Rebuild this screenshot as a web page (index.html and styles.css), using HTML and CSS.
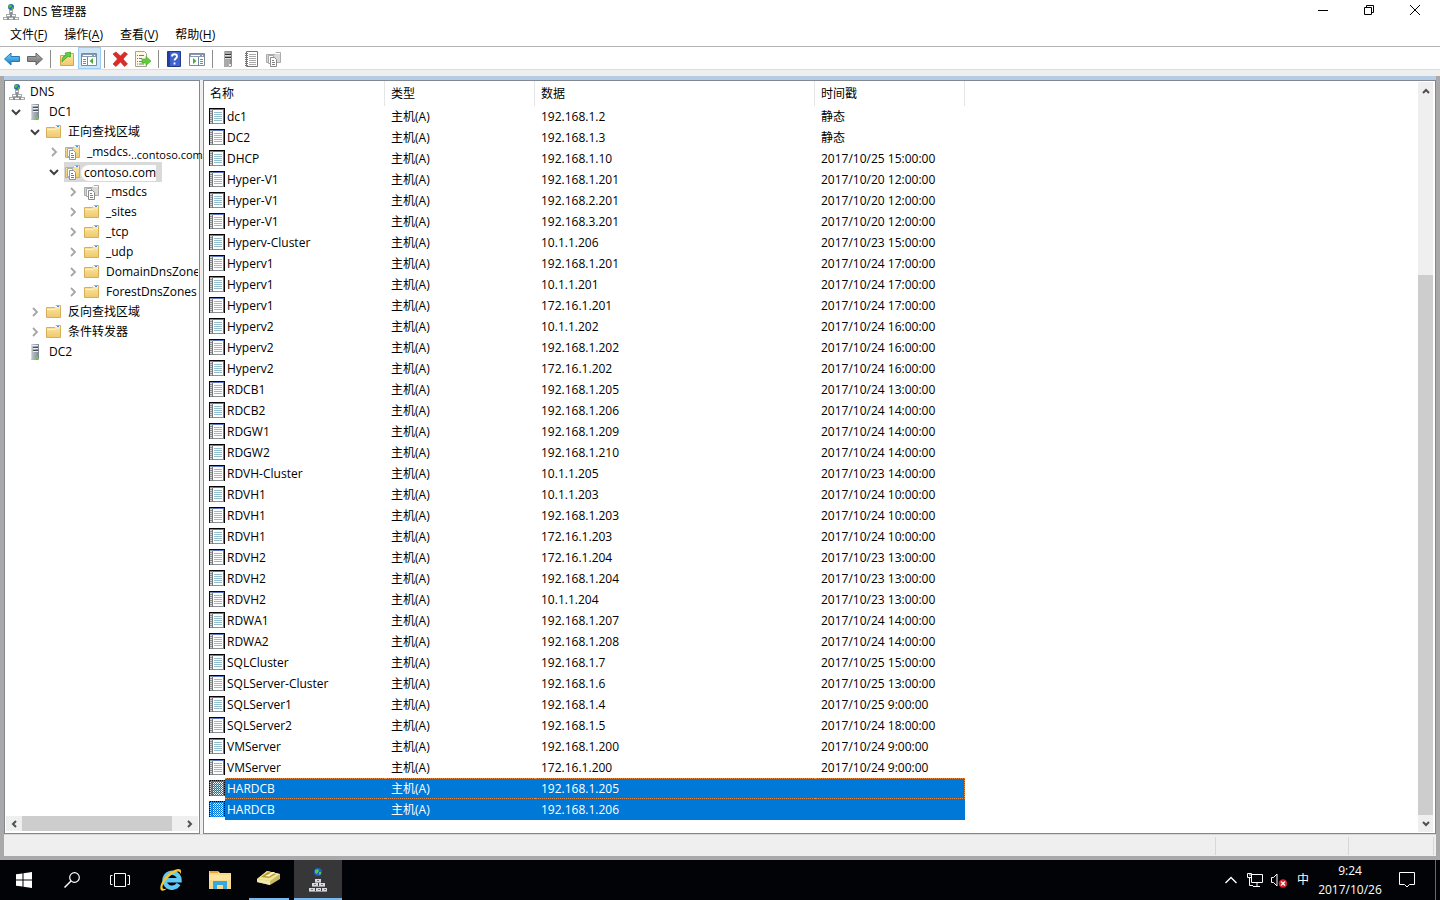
FILE: index.html
```html
<!DOCTYPE html>
<html lang="zh-CN">
<head>
<meta charset="utf-8">
<title>DNS 管理器</title>
<link rel="stylesheet" href="styles.css">
</head>
<body>
<svg class="sprite" aria-hidden="true">
  <defs>
    <linearGradient id="gFolder" x1="0" y1="0" x2="0" y2="1"><stop offset="0" stop-color="#fbe7ac"/><stop offset="1" stop-color="#f0c869"/></linearGradient>
    <linearGradient id="gServer" x1="0" y1="0" x2="1" y2="0"><stop offset="0" stop-color="#c3cad1"/><stop offset="1" stop-color="#7d8790"/></linearGradient>
    <linearGradient id="gBlue" x1="0" y1="0" x2="0" y2="1"><stop offset="0" stop-color="#7fd4f8"/><stop offset="1" stop-color="#1279c8"/></linearGradient>
    <linearGradient id="gGray" x1="0" y1="0" x2="0" y2="1"><stop offset="0" stop-color="#b0b0b0"/><stop offset="1" stop-color="#6e6e6e"/></linearGradient>
    <pattern id="pDither" width="2" height="2" patternUnits="userSpaceOnUse"><path d="M0 0h1v1H0zM1 1h1v1H1z" fill="#0078d7"/></pattern>
  </defs>
  <symbol id="i-dns" viewBox="0 0 16 16">
    <circle cx="8" cy="3" r="3" fill="#2468c4"/><path d="M6 1l2-.5 1 1.500-2 2-2-1zM9 3l2 .5-1 2-1.500 0z" fill="#4fbf45"/>
    <path d="M6 6h4v4H6zM3 10h10v3H3zM0 13h16v3H0z" fill="#a7abb0"/>
    <path d="M7 7h2v1H7zM4 11h3v1H4zM9 11h3v1H9zM1 14h3v1H1zM6 14h4v1H6zM12 14h3v1h-3z" fill="#fff"/>
    <path d="M7 9h2M7.500 12.500h1M4.500 13.500h1M10.500 13.500h1M5 14v2M11 14v2M8 10v3" stroke="#6e747a"/>
  </symbol>
  <symbol id="i-server" viewBox="0 0 16 16">
    <path d="M4 1l1-1h7v15l-1 1H4z" fill="url(#gServer)"/><path d="M4 1h1v14H4z" fill="#d5dade"/>
    <path d="M6 3.500h5M6 6.500h5" stroke="#47525c"/><path d="M6 4.500h5M5 1.500h6M6 7.500h5" stroke="#e9edf0"/><path d="M9 13h2v2H9z" fill="#5be02c"/>
  </symbol>
  <symbol id="i-gserver" viewBox="0 0 16 16">
    <path d="M4 1l1-1h7v15l-1 1H4z" fill="#8d8d8d"/><path d="M4 1h6v15H4z" fill="#aaa"/>
    <path d="M5 3.500h6M5 6.500h6" stroke="#333"/><path d="M5 4.500h6M5 7.500h6" stroke="#ddd"/><path d="M9 13h2v2H9z" fill="#eee"/>
  </symbol>
  <symbol id="i-folder" viewBox="0 0 16 16">
    <path d="M.5 3.500h8l1.500-2h4.500v12H.5z" fill="url(#gFolder)" stroke="#d8ae58"/>
    <path d="M9 2.500h5" stroke="#fff"/><path d="M11 2.500h2" stroke="#3d8ce0"/><path d="M1 5.500h8l1.500-1.500H14" stroke="#fff1c8" fill="none"/>
  </symbol>
  <symbol id="i-zone" viewBox="0 0 16 16">
    <path d="M.5 3.500h8l1.500-2h4.500v12H.5z" fill="url(#gFolder)" stroke="#d8ae58"/><path d="M9 2.500h5" stroke="#fff"/><path d="M11 2.500h2" stroke="#3d8ce0"/>
    <path d="M2.500 4.500h5v8h-5z" fill="#fff" stroke="#a3adb6"/><path d="M4.500 6.500h4l2 2v7h-6z" fill="#fff" stroke="#8796a5"/><path d="M6 9.500h2M6 11.500h3M6 13.500h3" stroke="#5b7fb5"/>
  </symbol>
  <symbol id="i-gzone" viewBox="0 0 16 16">
    <path d="M.5 3.500h8l1.500-2h4.500v10H.5z" fill="#d8d8d8" stroke="#ababab"/><path d="M9 2.500h5" stroke="#fff"/>
    <path d="M2.500 4.500h5v8h-5z" fill="#fff" stroke="#a8a8a8"/><path d="M4.500 6.500h4l2 2v7h-6z" fill="#fff" stroke="#8a8a8a"/><path d="M6 9.500h2M6 11.500h3M6 13.500h3" stroke="#808080"/>
  </symbol>
  <symbol id="i-rec" viewBox="0 0 16 16">
    <path d="M0 0h16v16H0z" fill="#050508"/><path d="M1 1h14v15H1z" fill="#8b8f96"/><path d="M4 2h10v13H4z" fill="#fff"/><path d="M4 1h11v1H4zM14 2h1v13h-1z" fill="#5a76c8"/>
    <path d="M5 4.500h8M5 6.500h8M5 8.500h8M5 10.500h8M5 12.500h8" stroke="#93bccd"/>
    <path d="M1 2.500h2M1 4.500h2M1 6.500h2M1 8.500h2M1 10.500h2M1 12.500h2M1 14.500h2" stroke="#d9d9dc"/><path d="M3.500 2v14" stroke="#777"/>
  </symbol>
  <symbol id="i-recsel" viewBox="0 0 16 16"><use href="#i-rec"/><path d="M0 0h16v16H0z" fill="url(#pDither)"/></symbol>
  <symbol id="i-open" viewBox="0 0 10 10"><path d="M1 3l4 4 4-4" fill="none" stroke="#404040" stroke-width="2"/></symbol>
  <symbol id="i-shut" viewBox="0 0 10 10"><path d="M3 1l4 4-4 4" fill="none" stroke="#a6a6a6" stroke-width="1.800"/></symbol>
  <symbol id="i-arrow" viewBox="0 0 10 10"><path d="M2 7l3-3 3 3" fill="none" stroke="#505050" stroke-width="2"/></symbol>
</svg>

<div class="screen">
  <header class="titlebar">
    <svg class="ico"><use href="#i-dns"/></svg>
    <h1 class="title">DNS 管理器</h1>
    <div class="winbtns">
      <button class="winbtn" aria-label="最小化"><svg viewBox="0 0 12 12"><path d="M1 6.500h10" stroke="#000"/></svg></button>
      <button class="winbtn" aria-label="还原"><svg viewBox="0 0 12 12"><path d="M1.500 3.500h7v7h-7zM3.500 3V1.500h7v7H9" fill="none" stroke="#000"/></svg></button>
      <button class="winbtn" aria-label="关闭"><svg viewBox="0 0 12 12"><path d="M1 1l10 10M11 1L1 11" stroke="#000"/></svg></button>
    </div>
  </header>
  <nav class="menubar">
    <button class="menu">文件(<u>F</u>)</button><button class="menu">操作(<u>A</u>)</button><button class="menu">查看(<u>V</u>)</button><button class="menu">帮助(<u>H</u>)</button>
  </nav>
  <div class="toolbar">
    <button class="tool" aria-label="后退"><svg class="ico" viewBox="0 0 16 16"><path d="M.5 8L7 2v3.500h8.500v5H7V14z" fill="url(#gBlue)" stroke="#2579b5"/></svg></button>
    <button class="tool" aria-label="前进"><svg class="ico" viewBox="0 0 16 16"><path d="M15.500 8L9 2v3.500H.5v5H9V14z" fill="url(#gGray)" stroke="#666"/></svg></button>
    <span class="sep"></span>
    <button class="tool" aria-label="上一级"><svg class="ico" viewBox="0 0 16 16"><path d="M2.500 4.500h6l1-2h6v12h-13z" fill="url(#gFolder)" stroke="#cfa64e"/><path d="M4 11c0-4 1-6 4-7L7 2l5.500-1v5L10 5.500C8 7 6.500 8.500 4 11z" fill="#5fcf3a" stroke="#2f9421" stroke-width=".6"/></svg></button>
    <button class="tool pressed" aria-label="显示/隐藏控制台树"><svg class="ico" viewBox="0 0 16 16"><path d="M.5 2.500h15v12H.5z" fill="#fff" stroke="#7d8a9a"/><path d="M1 3h14v3H1z" fill="#8b9bb0"/><path d="M2 4.500h9M13 4.500h1" stroke="#fff"/><path d="M6.500 6v8M2 8.500h3M2 10.500h3M2 12.500h3" stroke="#7189b3"/><path d="M12 7v6L8.500 10z" fill="#46ae35"/></svg></button>
    <span class="sep"></span>
    <button class="tool" aria-label="删除"><svg class="ico" viewBox="0 0 16 16"><path d="M1 3l3-2 4.500 4 4-4 3 2-4.500 5L15.500 13l-3 2.500-4-4.500-4.500 4.500L1 13l4.500-5z" fill="#dd2c27" stroke="#b81e1d" stroke-width=".6"/></svg></button>
    <button class="tool" aria-label="导出列表"><svg class="ico" viewBox="0 0 16 16"><path d="M.5.5h9l2 2v13H.5z" fill="#fdf9e2" stroke="#a8a58e"/><path d="M2 4.500h1M4 4.500h5M2 7.500h1M4 7.500h3M2 10.500h1M4 10.500h3M2 13h1M4 13h5" stroke="#777795"/><path d="M7 8h4V5.500l5 4.500-5 4.500V12H7z" fill="#62cd38" stroke="#3ea628" stroke-width=".6"/></svg></button>
    <span class="sep"></span>
    <button class="tool" aria-label="帮助"><svg class="ico" viewBox="0 0 16 16"><path d="M1.500.5h13v15h-13z" fill="#3e63cc" stroke="#23398a"/><path d="M2 1h2v14H2z" fill="#253f9f"/><path d="M6 5.500c0-3 5-3 5 0 0 2-2.500 2-2.500 4M8.500 11.500v2" fill="none" stroke="#fff" stroke-width="1.800"/></svg></button>
    <button class="tool" aria-label="显示/隐藏操作窗格"><svg class="ico" viewBox="0 0 16 16"><path d="M.5 2.500h15v12H.5z" fill="#fff" stroke="#7d8a9a"/><path d="M1 3h14v3H1z" fill="#8b9bb0"/><path d="M2 4.500h9M13 4.500h1" stroke="#fff"/><path d="M9.500 6v8M11 8.500h3M11 10.500h3M11 12.500h3" stroke="#7189b3"/><path d="M4 7v6l3.500-3z" fill="#46ae35"/></svg></button>
    <span class="sep"></span>
    <button class="tool" aria-label="新建服务器"><svg class="ico"><use href="#i-gserver"/></svg></button>
    <button class="tool" aria-label="新建记录"><svg class="ico" viewBox="0 0 16 16"><path d="M3.500.5h11v15h-11z" fill="#fff" stroke="#777"/><path d="M6 3.500h7M6 5.500h7M6 7.500h7M6 9.500h7M6 11.500h7M6 13.500h7" stroke="#aaa"/><path d="M2 2.500h3M2 4.500h3M2 6.500h3M2 8.500h3M2 10.500h3M2 12.500h3M2 14.500h3" stroke="#777"/></svg></button>
    <button class="tool" aria-label="新建区域"><svg class="ico"><use href="#i-gzone"/></svg></button>
  </div>

  <main class="client">
    <div class="panes">
      <section class="pane treepane">
        <ul class="tree">
          <li class="node root"><svg class="ico"><use href="#i-dns"/></svg><span class="label">DNS</span></li>
          <li class="node d1"><svg class="exp"><use href="#i-open"/></svg><svg class="ico"><use href="#i-server"/></svg><span class="label">DC1</span></li>
          <li class="node d2"><svg class="exp"><use href="#i-open"/></svg><svg class="ico"><use href="#i-folder"/></svg><span class="label">正向查找区域</span></li>
          <li class="node d3"><svg class="exp"><use href="#i-shut"/></svg><svg class="ico"><use href="#i-zone"/></svg><span class="label">_msdcs.</span><span class="overlap">..contoso.com</span></li>
          <li class="node d3"><svg class="exp"><use href="#i-open"/></svg><span class="chosen"><svg class="ico"><use href="#i-zone"/></svg><span class="label patch">contoso.com</span></span></li>
          <li class="node d4"><svg class="exp"><use href="#i-shut"/></svg><svg class="ico"><use href="#i-gzone"/></svg><span class="label">_msdcs</span></li>
          <li class="node d4"><svg class="exp"><use href="#i-shut"/></svg><svg class="ico"><use href="#i-folder"/></svg><span class="label">_sites</span></li>
          <li class="node d4"><svg class="exp"><use href="#i-shut"/></svg><svg class="ico"><use href="#i-folder"/></svg><span class="label">_tcp</span></li>
          <li class="node d4"><svg class="exp"><use href="#i-shut"/></svg><svg class="ico"><use href="#i-folder"/></svg><span class="label">_udp</span></li>
          <li class="node d4"><svg class="exp"><use href="#i-shut"/></svg><svg class="ico"><use href="#i-folder"/></svg><span class="label clip">DomainDnsZones</span></li>
          <li class="node d4"><svg class="exp"><use href="#i-shut"/></svg><svg class="ico"><use href="#i-folder"/></svg><span class="label clip">ForestDnsZones</span></li>
          <li class="node d2"><svg class="exp"><use href="#i-shut"/></svg><svg class="ico"><use href="#i-folder"/></svg><span class="label">反向查找区域</span></li>
          <li class="node d2"><svg class="exp"><use href="#i-shut"/></svg><svg class="ico"><use href="#i-folder"/></svg><span class="label">条件转发器</span></li>
          <li class="node d1"><span class="exp"></span><svg class="ico"><use href="#i-server"/></svg><span class="label">DC2</span></li>
        </ul>
        <div class="hscroll">
          <svg class="arrow left"><use href="#i-arrow"/></svg><span class="hthumb"></span><svg class="arrow right"><use href="#i-arrow"/></svg>
        </div>
      </section>
      <section class="pane listpane">
        <div class="listarea">
          <table class="records">
            <colgroup><col class="c-name"><col class="c-type"><col class="c-data"><col class="c-time"></colgroup>
            <thead><tr><th>名称</th><th>类型</th><th>数据</th><th>时间戳</th></tr></thead>
            <tbody>
<tr><td><svg class="ico"><use href="#i-rec"/></svg><span>dc1</span></td><td>主机(A)</td><td>192.168.1.2</td><td>静态</td></tr>
<tr><td><svg class="ico"><use href="#i-rec"/></svg><span>DC2</span></td><td>主机(A)</td><td>192.168.1.3</td><td>静态</td></tr>
<tr><td><svg class="ico"><use href="#i-rec"/></svg><span>DHCP</span></td><td>主机(A)</td><td>192.168.1.10</td><td>2017/10/25 15:00:00</td></tr>
<tr><td><svg class="ico"><use href="#i-rec"/></svg><span>Hyper-V1</span></td><td>主机(A)</td><td>192.168.1.201</td><td>2017/10/20 12:00:00</td></tr>
<tr><td><svg class="ico"><use href="#i-rec"/></svg><span>Hyper-V1</span></td><td>主机(A)</td><td>192.168.2.201</td><td>2017/10/20 12:00:00</td></tr>
<tr><td><svg class="ico"><use href="#i-rec"/></svg><span>Hyper-V1</span></td><td>主机(A)</td><td>192.168.3.201</td><td>2017/10/20 12:00:00</td></tr>
<tr><td><svg class="ico"><use href="#i-rec"/></svg><span>Hyperv-Cluster</span></td><td>主机(A)</td><td>10.1.1.206</td><td>2017/10/23 15:00:00</td></tr>
<tr><td><svg class="ico"><use href="#i-rec"/></svg><span>Hyperv1</span></td><td>主机(A)</td><td>192.168.1.201</td><td>2017/10/24 17:00:00</td></tr>
<tr><td><svg class="ico"><use href="#i-rec"/></svg><span>Hyperv1</span></td><td>主机(A)</td><td>10.1.1.201</td><td>2017/10/24 17:00:00</td></tr>
<tr><td><svg class="ico"><use href="#i-rec"/></svg><span>Hyperv1</span></td><td>主机(A)</td><td>172.16.1.201</td><td>2017/10/24 17:00:00</td></tr>
<tr><td><svg class="ico"><use href="#i-rec"/></svg><span>Hyperv2</span></td><td>主机(A)</td><td>10.1.1.202</td><td>2017/10/24 16:00:00</td></tr>
<tr><td><svg class="ico"><use href="#i-rec"/></svg><span>Hyperv2</span></td><td>主机(A)</td><td>192.168.1.202</td><td>2017/10/24 16:00:00</td></tr>
<tr><td><svg class="ico"><use href="#i-rec"/></svg><span>Hyperv2</span></td><td>主机(A)</td><td>172.16.1.202</td><td>2017/10/24 16:00:00</td></tr>
<tr><td><svg class="ico"><use href="#i-rec"/></svg><span>RDCB1</span></td><td>主机(A)</td><td>192.168.1.205</td><td>2017/10/24 13:00:00</td></tr>
<tr><td><svg class="ico"><use href="#i-rec"/></svg><span>RDCB2</span></td><td>主机(A)</td><td>192.168.1.206</td><td>2017/10/24 14:00:00</td></tr>
<tr><td><svg class="ico"><use href="#i-rec"/></svg><span>RDGW1</span></td><td>主机(A)</td><td>192.168.1.209</td><td>2017/10/24 14:00:00</td></tr>
<tr><td><svg class="ico"><use href="#i-rec"/></svg><span>RDGW2</span></td><td>主机(A)</td><td>192.168.1.210</td><td>2017/10/24 14:00:00</td></tr>
<tr><td><svg class="ico"><use href="#i-rec"/></svg><span>RDVH-Cluster</span></td><td>主机(A)</td><td>10.1.1.205</td><td>2017/10/23 14:00:00</td></tr>
<tr><td><svg class="ico"><use href="#i-rec"/></svg><span>RDVH1</span></td><td>主机(A)</td><td>10.1.1.203</td><td>2017/10/24 10:00:00</td></tr>
<tr><td><svg class="ico"><use href="#i-rec"/></svg><span>RDVH1</span></td><td>主机(A)</td><td>192.168.1.203</td><td>2017/10/24 10:00:00</td></tr>
<tr><td><svg class="ico"><use href="#i-rec"/></svg><span>RDVH1</span></td><td>主机(A)</td><td>172.16.1.203</td><td>2017/10/24 10:00:00</td></tr>
<tr><td><svg class="ico"><use href="#i-rec"/></svg><span>RDVH2</span></td><td>主机(A)</td><td>172.16.1.204</td><td>2017/10/23 13:00:00</td></tr>
<tr><td><svg class="ico"><use href="#i-rec"/></svg><span>RDVH2</span></td><td>主机(A)</td><td>192.168.1.204</td><td>2017/10/23 13:00:00</td></tr>
<tr><td><svg class="ico"><use href="#i-rec"/></svg><span>RDVH2</span></td><td>主机(A)</td><td>10.1.1.204</td><td>2017/10/23 13:00:00</td></tr>
<tr><td><svg class="ico"><use href="#i-rec"/></svg><span>RDWA1</span></td><td>主机(A)</td><td>192.168.1.207</td><td>2017/10/24 14:00:00</td></tr>
<tr><td><svg class="ico"><use href="#i-rec"/></svg><span>RDWA2</span></td><td>主机(A)</td><td>192.168.1.208</td><td>2017/10/24 14:00:00</td></tr>
<tr><td><svg class="ico"><use href="#i-rec"/></svg><span>SQLCluster</span></td><td>主机(A)</td><td>192.168.1.7</td><td>2017/10/25 15:00:00</td></tr>
<tr><td><svg class="ico"><use href="#i-rec"/></svg><span>SQLServer-Cluster</span></td><td>主机(A)</td><td>192.168.1.6</td><td>2017/10/25 13:00:00</td></tr>
<tr><td><svg class="ico"><use href="#i-rec"/></svg><span>SQLServer1</span></td><td>主机(A)</td><td>192.168.1.4</td><td>2017/10/25 9:00:00</td></tr>
<tr><td><svg class="ico"><use href="#i-rec"/></svg><span>SQLServer2</span></td><td>主机(A)</td><td>192.168.1.5</td><td>2017/10/24 18:00:00</td></tr>
<tr><td><svg class="ico"><use href="#i-rec"/></svg><span>VMServer</span></td><td>主机(A)</td><td>192.168.1.200</td><td>2017/10/24 9:00:00</td></tr>
<tr><td><svg class="ico"><use href="#i-rec"/></svg><span>VMServer</span></td><td>主机(A)</td><td>172.16.1.200</td><td>2017/10/24 9:00:00</td></tr>
<tr class="sel focus"><td><svg class="ico"><use href="#i-recsel"/></svg><span>HARDCB</span></td><td>主机(A)</td><td>192.168.1.205</td><td></td></tr>
<tr class="sel"><td><svg class="ico"><use href="#i-recsel"/></svg><span>HARDCB</span></td><td>主机(A)</td><td>192.168.1.206</td><td></td></tr>
            </tbody>
          </table>
        </div>
        <div class="vscroll">
          <svg class="arrow"><use href="#i-arrow"/></svg><span class="vgap"></span><span class="vthumb"></span><svg class="arrow down"><use href="#i-arrow"/></svg>
        </div>
      </section>
    </div>
    <div class="status"><span class="s-main"></span><span class="s-mid"></span><span class="s-end"></span></div>
  </main>

  <footer class="taskbar">
    <button class="task" aria-label="开始"><svg class="ico" viewBox="0 0 16 16"><path d="M0 2.300L6.500 1.400V7.500H0zM7.500 1.200L16 0v7.500H7.500zM0 8.500h6.500v6.100L0 13.700zM7.500 8.500H16V16l-8.500-1.200z" fill="#fff"/></svg></button>
    <button class="task" aria-label="搜索"><svg class="ico" viewBox="0 0 16 16"><circle cx="10.500" cy="5.500" r="4.800" fill="none" stroke="#fff" stroke-width="1.200"/><path d="M7 9L.5 15.500" stroke="#fff" stroke-width="1.500"/></svg></button>
    <button class="task" aria-label="任务视图"><svg class="big" viewBox="0 0 24 24"><path d="M6.500 5.500h11v13h-11zM4.500 7.500h-2v9h2M19.500 7.500h2v9h-2" fill="none" stroke="#fff"/></svg></button>
    <span class="tgap"></span>
    <button class="task" aria-label="Internet Explorer"><svg class="big" viewBox="0 0 24 24"><path d="M19.500 16a7.500 7.500 0 1 1 1-3.800H7" fill="none" stroke="#62c8f5" stroke-width="4.400"/><path d="M2.500 22.500C-2 19 7 5 15.500 2c5-2 8-1 6 4.500 0-3-2-4-5.500-2C9.500 8 1.500 17.500 4 20.500c1 1 3 .5 4.500-.5-2 2-4.500 3.500-6 2.500z" fill="#f7c530"/></svg></button>
    <button class="task" aria-label="文件资源管理器"><svg class="big" viewBox="0 0 24 24"><path d="M1 3h9l2 2h11v16H1z" fill="#f7d98a"/><path d="M2 3h8v2H2z" fill="#e8a33c"/><path d="M1 7h22v5H1z" fill="#fde3a0"/><path d="M5 13h14v8h-4v-4H9v4H5z" fill="#36a7e3"/></svg></button>
    <button class="task running" aria-label="服务器管理器"><svg class="big" viewBox="0 0 24 24"><path d="M0 11L10 3l13 3v5L13 17 0 14z" fill="#c9bd63"/><path d="M0 11L10 3l13 3-10 7z" fill="#efe49c"/><path d="M4 9l7-5 8 2-7 4z" fill="#b99b2c"/><path d="M8 8l8-4 2 .5-6 4z" fill="#fffbe0"/><path d="M0 11l13 2v4L0 14z" fill="#f0e9ae"/></svg></button>
    <button class="task active" aria-label="DNS 管理器"><svg class="big" viewBox="0 0 24 24"><circle cx="12" cy="4" r="4" fill="#1e5fc5"/><path d="M9 2l3-1 1 2-2 3-2-1zM13 4l2 0 0 2-2 1z" fill="#50c844"/><path d="M9 11h6v4H9zM6 15h6v4H6zM13 15h6v4h-6zM3 20h6v4H3zM10 20h5v4h-5zM16 20h5v4h-5z" fill="#d8dade"/><path d="M9 14.500h6M6 18.500h13M3 23.500h18" stroke="#92969c"/><path d="M11 12.500h2M8 16.500h2M15 16.500h2M5 21.500h2M12 21.500h2M18 21.500h2" stroke="#777"/></svg></button>
    <div class="tray">
      <button class="tbtn" aria-label="显示隐藏的图标"><svg class="ico" viewBox="0 0 16 16"><path d="M2.500 11L8 5.500l5.500 5.500" fill="none" stroke="#fff" stroke-width="1.400"/></svg></button>
      <button class="tbtn" aria-label="网络"><svg class="ico" viewBox="0 0 16 16"><path d="M4.500 2.500h11v8h-11zM10 11v3M6 14.500h7M.5 1.500h4v4h-4zM2.500 6v7.500H6" fill="none" stroke="#fff"/><path d="M2 3h2M4 5h1" stroke="#fff"/></svg></button>
      <button class="tbtn" aria-label="音量"><svg class="ico" viewBox="0 0 16 16"><path d="M.5 5.500h2L6 2v12l-3.500-3.500h-2z" fill="none" stroke="#fff"/><circle cx="12" cy="11.500" r="4.300" fill="#e0202c"/><path d="M10 9.500l4 4M14 9.500l-4 4" stroke="#fff" stroke-width="1.300"/></svg></button>
      <button class="tbtn ime">中</button>
      <div class="clock"><time>9:24</time><time>2017/10/26</time></div>
      <button class="tbtn note" aria-label="操作中心"><svg class="ico" viewBox="0 0 16 16"><path d="M.5.5h15v12h-5L8 15l-2.500-2.500h-5z" fill="none" stroke="#fff"/></svg></button>
      <span class="peek"></span>
    </div>
  </footer>
</div>
</body>
</html>
```
FILE: styles.css
```css
* { box-sizing: border-box; }
body {
  margin: 0;
  font-family: "Open Sans", "Noto Sans CJK SC", sans-serif;
  font-size: 12px;
  line-height: 20px;
  color: #000;
  background: #fff;
}
button { font: inherit; color: inherit; background: none; border: 0; padding: 0; margin: 0; }
.sprite { position: absolute; width: 0; height: 0; }
.ico { width: 16px; height: 16px; flex: none; display: block; }
.big { width: 24px; height: 24px; display: block; }
.screen { display: flex; flex-direction: column; min-height: 100vh; }

.titlebar { display: flex; align-items: center; height: 24px; padding-left: 3px; }
.title { margin: 0 0 0 4px; font-size: 12px; font-weight: normal; line-height: 20px; }
.winbtns { display: flex; margin-left: auto; margin-bottom: 4px; padding-right: 2px; }
.winbtn { width: 46px; height: 20px; display: flex; align-items: center; justify-content: center; }
.winbtn svg { width: 12px; height: 12px; }

.menubar { display: flex; gap: 17px; height: 22px; padding: 1px 0 0 10px; }
.menu { height: 20px; line-height: 20px; }
.menu u { text-underline-offset: 2px; }

.toolbar { display: flex; align-items: center; height: 24px; padding-left: 1px; border-top: 1px solid #b4b4b4; border-bottom: 1px solid #dcdcdc; }
.tool { width: 23px; height: 22px; display: flex; align-items: center; justify-content: center; padding: 2px 1px 0 0; }
.tool.pressed { background: #cde6fa; border: 1px solid #99cdf5; }
.sep { width: 1px; height: 18px; margin: 2px 4px 0 3px; background: #8c8c8c; }

.client {
  flex: 1;
  display: flex;
  flex-direction: column;
  margin-top: 6px;
  border: solid #a9a9a9;
  border-width: 0 4px 4px;
  background: #efefef;
  box-shadow: 0 -6px 0 #efefef;
}
.panes { flex: 1; display: flex; gap: 3px; border-top: 4px solid #b4cce4; }
.pane { border: 1px solid #828790; background: #fff; }

.treepane { width: 196px; display: flex; flex-direction: column; flex: none; }
.tree { list-style: none; margin: 0; padding: 1px 0 0; flex: 1; }
.node { display: flex; align-items: center; height: 20px; padding-right: 1px; white-space: nowrap; position: relative; }
.root { padding-left: 4px; }
.d1 { padding-left: 6px; }
.d2 { padding-left: 25px; }
.d3 { padding-left: 44px; }
.d4 { padding-left: 63px; }
.exp { width: 10px; height: 10px; margin-right: 6px; flex: none; }
.label { padding-left: 6px; }
.root .label { padding-left: 5px; }
.clip { overflow: hidden; }
.chosen { display: flex; align-items: center; height: 20px; width: 98px; background: #d9d9d9; margin-left: -1px; padding-left: 1px; }
.patch { padding-left: 3px; line-height: 16px; margin: 1px 6px 0 0; flex: 1; background: #fff; border-radius: 12px 2px 2px 12px; }
.overlap { position: absolute; left: 126px; top: 3px; z-index: 1; font-size: 11px; }

.hscroll { display: flex; align-items: center; height: 15px; margin: 0 1px 2px; background: #efefef; }
.arrow { width: 10px; height: 10px; margin: 0 3px; flex: none; }
.left { transform: rotate(-90deg); }
.right { transform: rotate(90deg); margin-left: auto; }
.down { transform: rotate(180deg); }
.hthumb { width: 150px; height: 15px; background: #cdcdcd; }

.listpane { flex: 1; display: flex; }
.listarea { flex: 1; }
.records { border-collapse: separate; border-spacing: 0; table-layout: fixed; width: 761px; }
.c-name { width: 181px; }
.c-type, .c-time { width: 150px; }
.c-data { width: 280px; }
.records th { height: 25px; padding: 0 6px; text-align: left; font-weight: normal; border-right: 1px solid #e5e5e5; }
.records td { height: 21px; padding: 0 6px; line-height: 19px; white-space: nowrap; }
.records td:first-child { display: flex; align-items: flex-start; padding: 0 0 0 5px; }
.records .ico { margin-top: 2px; }
.records td span { flex: 1; height: 21px; line-height: 21px; padding-left: 2px; }
.sel td { color: #fff; background: #0078d7; }
.sel td:first-child { background: none; }
.sel td span { background: #0078d7; }
.focus td:not(:first-child) { border: dotted #f08a3c; border-width: 1px 0; line-height: 17px; }
.focus td:not(:first-child):last-child { border-right-width: 1px; }
.records .focus td span { border: dotted #f08a3c; border-width: 1px 0; line-height: 19px; }

.vscroll { width: 15px; margin: 1px 2px 1px 0; display: flex; flex-direction: column; align-items: center; background: #efefef; }
.vscroll .arrow { margin: 4px 0 3px; }
.vgap { flex: 176; }
.vthumb { flex: 541; width: 15px; background: #cdcdcd; }

.status { display: flex; height: 22px; padding: 2px 2px 1px 0; border-top: 1px solid #d7d7d7; }
.status span { border-right: 1px solid #d7d7d7; }
.s-main { flex: 1; }
.s-mid { width: 133px; }
.s-end { width: 85px; }

.taskbar { display: flex; height: 40px; background: #020306; color: #fff; }
.task { width: 48px; height: 40px; margin-right: 1px; display: flex; align-items: center; justify-content: center; }
.task:nth-child(-n+3) { margin-right: 0; }
.tgap { width: 3px; }
.running { background: linear-gradient(#76b9ed, #76b9ed) center bottom / 40px 2px no-repeat; }
.active { background: #373739; border-bottom: 2px solid #76b9ed; padding-top: 2px; }
.tray { margin-left: auto; display: flex; align-items: center; }
.tbtn { width: 24px; height: 40px; display: flex; align-items: center; justify-content: center; }
.clock { width: 70px; display: flex; flex-direction: column; align-items: center; line-height: 19px; }
.note { width: 44px; }
.peek { width: 5px; height: 40px; margin-left: 6px; border-left: 1px solid #66686c; }
```
